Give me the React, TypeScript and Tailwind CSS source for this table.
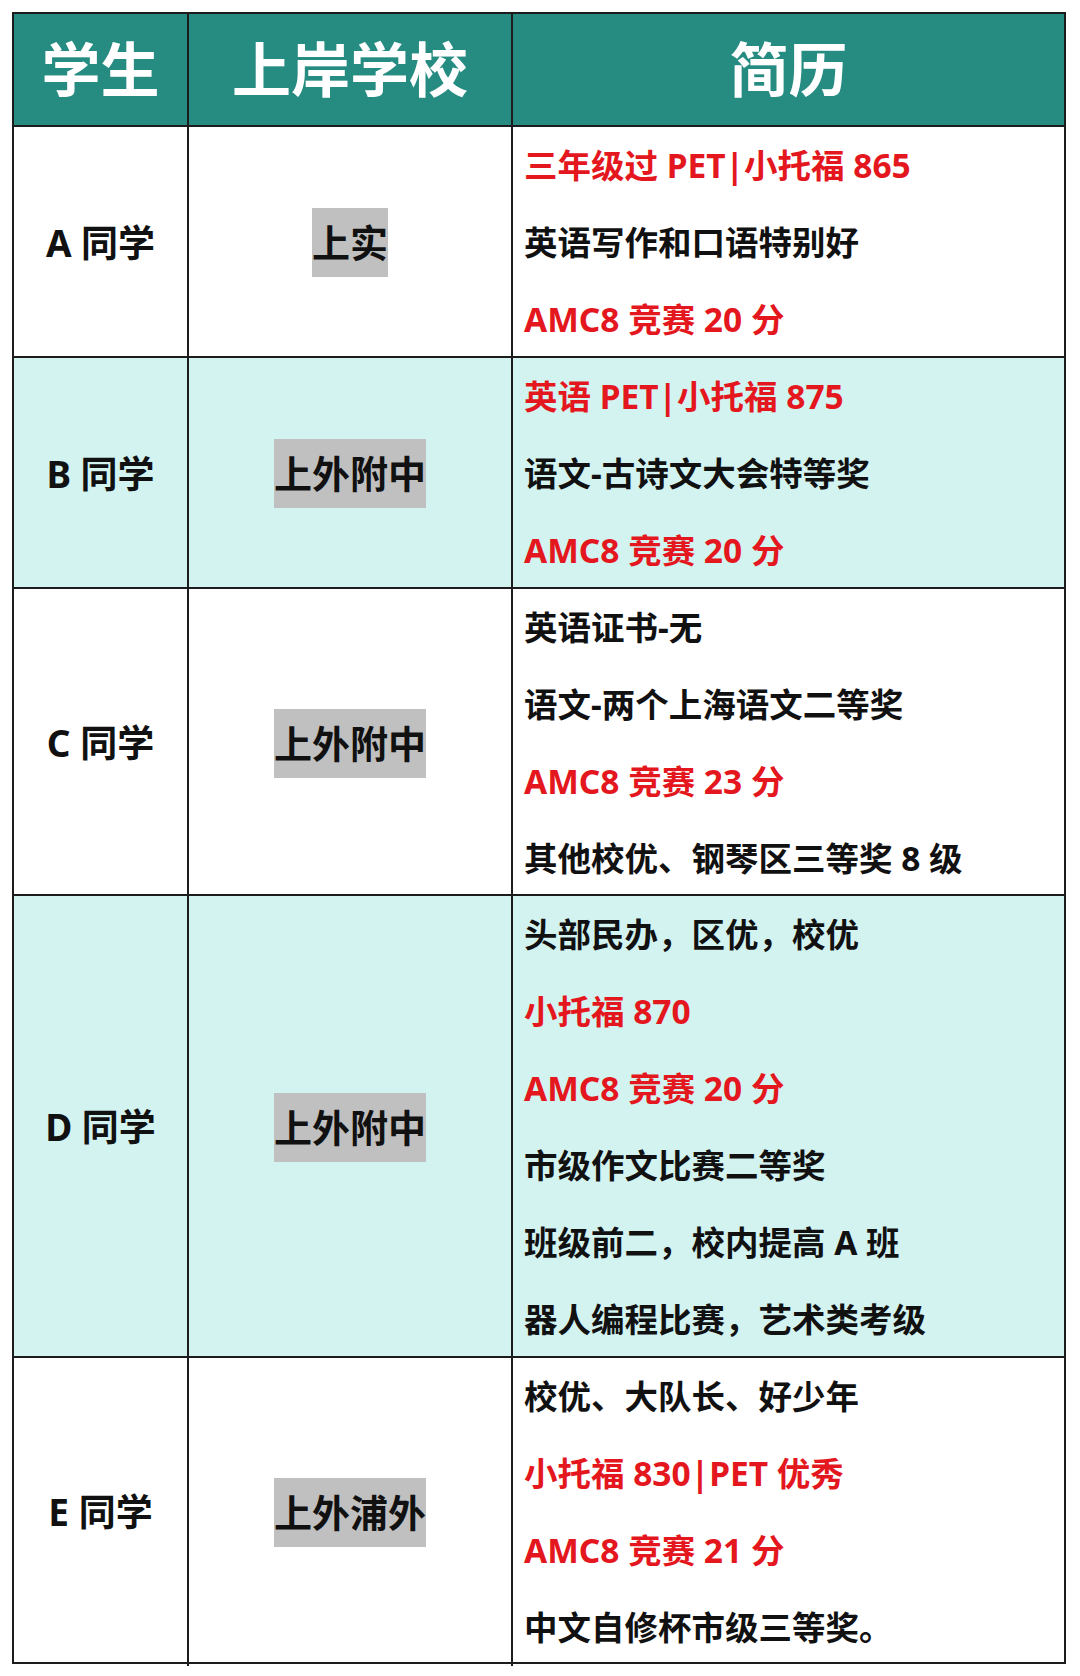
import React from 'react';

type Line = { text: string; red?: boolean };

interface Student {
    name: string;
    school: string;
    height: string;
    lines: Line[];
    tinted: boolean;
}

const students: Student[] = [
    {
        name: 'A 同学',
        school: '上实',
        height: 'h-[231px]',
        tinted: false,
        lines: [
            { text: '三年级过 PET|小托福 865', red: true },
            { text: '英语写作和口语特别好' },
            { text: 'AMC8 竞赛 20 分', red: true },
        ],
    },
    {
        name: 'B 同学',
        school: '上外附中',
        height: 'h-[231px]',
        tinted: true,
        lines: [
            { text: '英语 PET|小托福 875', red: true },
            { text: '语文-古诗文大会特等奖' },
            { text: 'AMC8 竞赛 20 分', red: true },
        ],
    },
    {
        name: 'C 同学',
        school: '上外附中',
        height: 'h-[307px]',
        tinted: false,
        lines: [
            { text: '英语证书-无' },
            { text: '语文-两个上海语文二等奖' },
            { text: 'AMC8 竞赛 23 分', red: true },
            { text: '其他校优、钢琴区三等奖 8 级' },
        ],
    },
    {
        name: 'D 同学',
        school: '上外附中',
        height: 'h-[462px]',
        tinted: true,
        lines: [
            { text: '头部民办，区优，校优' },
            { text: '小托福 870', red: true },
            { text: 'AMC8 竞赛 20 分', red: true },
            { text: '市级作文比赛二等奖' },
            { text: '班级前二，校内提高 A 班' },
            { text: '器人编程比赛，艺术类考级' },
        ],
    },
    {
        name: 'E 同学',
        school: '上外浦外',
        height: 'h-[304px]',
        tinted: false,
        lines: [
            { text: '校优、大队长、好少年' },
            { text: '小托福 830|PET 优秀', red: true },
            { text: 'AMC8 竞赛 21 分', red: true },
            { text: '中文自修杯市级三等奖。' },
        ],
    },
];

export default function App() {
    return (
        <div
            className="w-[1080px] h-[1676px] bg-white pt-[12px] pl-[12px]"
            style={{ fontFamily: '"Noto Sans", "Noto Sans CJK SC", sans-serif' }}
        >
            <div className="w-[1054px] border-2 border-[#1c1c1c]">
                {/* Header */}
                <div className="grid grid-cols-[175px_324px_1fr] h-[113px] bg-[#268b81] border-b-2 border-[#1c1c1c] text-white font-bold text-[59px]">
                    <div className="flex items-center justify-center border-r-2 border-[#1c1c1c]">学生</div>
                    <div className="flex items-center justify-center border-r-2 border-[#1c1c1c]">上岸学校</div>
                    <div className="flex items-center justify-center">简历</div>
                </div>

                {students.map((s, i) => (
                    <div
                        key={s.name}
                        className={`grid grid-cols-[175px_324px_1fr] ${s.height} ${s.tinted ? 'bg-[#d3f3f1]' : 'bg-white'} ${i < students.length - 1 ? 'border-b-2 border-[#1c1c1c]' : ''}`}
                    >
                        <div className="flex items-center justify-center border-r-2 border-[#1c1c1c] text-[37px] font-bold text-[#111]">
                            {s.name}
                        </div>
                        <div className="flex items-center justify-center border-r-2 border-[#1c1c1c]">
                            <span className="bg-[#c0c0c0] text-[38px] font-bold leading-[69px] text-[#111]">{s.school}</span>
                        </div>
                        <div className="flex flex-col justify-center pl-[11px]">
                            {s.lines.map((l, j) => (
                                <div
                                    key={j}
                                    className={`text-[33.5px] font-bold leading-[77px] whitespace-nowrap ${l.red ? 'text-[#e3171d]' : 'text-[#111]'}`}
                                >
                                    {l.text}
                                </div>
                            ))}
                        </div>
                    </div>
                ))}
            </div>
        </div>
    );
}
